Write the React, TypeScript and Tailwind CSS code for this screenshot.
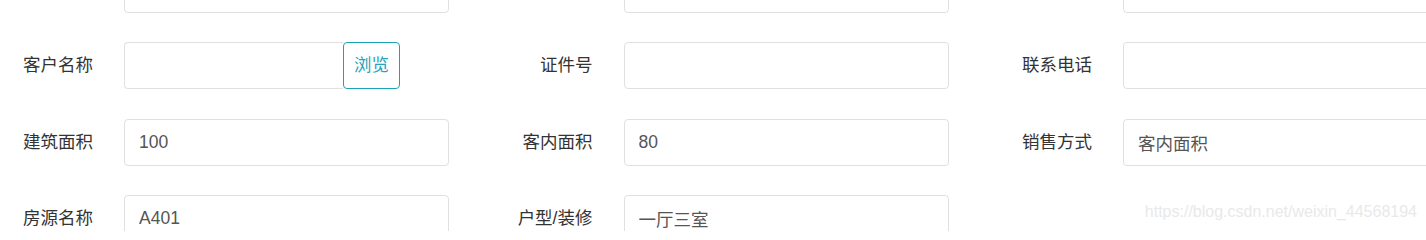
const rows = [
  [
    { label: "", value: "" },
    { label: "", value: "" },
    { label: "", value: "" },
  ],
  [
    { label: "客户名称", value: "", browse: true },
    { label: "证件号", value: "" },
    { label: "联系电话", value: "" },
  ],
  [
    { label: "建筑面积", value: "100" },
    { label: "客内面积", value: "80" },
    { label: "销售方式", value: "客内面积" },
  ],
  [
    { label: "房源名称", value: "A401" },
    { label: "户型/装修", value: "一厅三室" },
    null,
  ],
];

type Field = { label: string; value: string; browse?: boolean } | null;

function FormField({ field }: { field: Field }) {
  if (!field) return <div />;
  return (
    <div className="flex items-center">
      <label className="w-[124px] shrink-0 pr-[31px] text-right text-[17.5px] text-[#333]">
        {field.label}
      </label>
      {field.browse ? (
        <div className="flex w-[276px] shrink-0">
          <input
            readOnly
            value={field.value}
            className="h-[47px] w-[219px] rounded-l-[4px] border border-r-0 border-[#e0e0e0] bg-white px-[14px] text-[17.5px] text-[#555] outline-none"
          />
          <button className="h-[47px] w-[57px] rounded-[4px] border border-[#1ba2b8] bg-white text-[17.5px] text-[#29a3bd]">
            浏览
          </button>
        </div>
      ) : (
        <input
          readOnly
          value={field.value}
          className="h-[47px] w-[325px] shrink-0 rounded-[4px] border border-[#e0e0e0] bg-white px-[14px] text-[17.5px] text-[#555] outline-none"
        />
      )}
    </div>
  );
}

export default function App() {
  return (
    <div className="relative h-[231px] w-full overflow-hidden bg-white font-['Liberation_Sans','Noto_Sans_CJK_SC',sans-serif]">
      {/* form */}
      <div className="-mt-[34.5px] grid w-[1500px] grid-cols-[repeat(3,499.5px)] gap-y-[29.5px]">
        {rows.map((row, i) =>
          row.map((field, j) => <FormField key={`${i}-${j}`} field={field} />)
        )}
      </div>

      {/* watermark */}
      <div className="absolute right-[9px] top-[203px] text-[16px] leading-[18px] text-[#e9e9e9]">
        https://blog.csdn.net/weixin_44568194
      </div>
    </div>
  );
}
